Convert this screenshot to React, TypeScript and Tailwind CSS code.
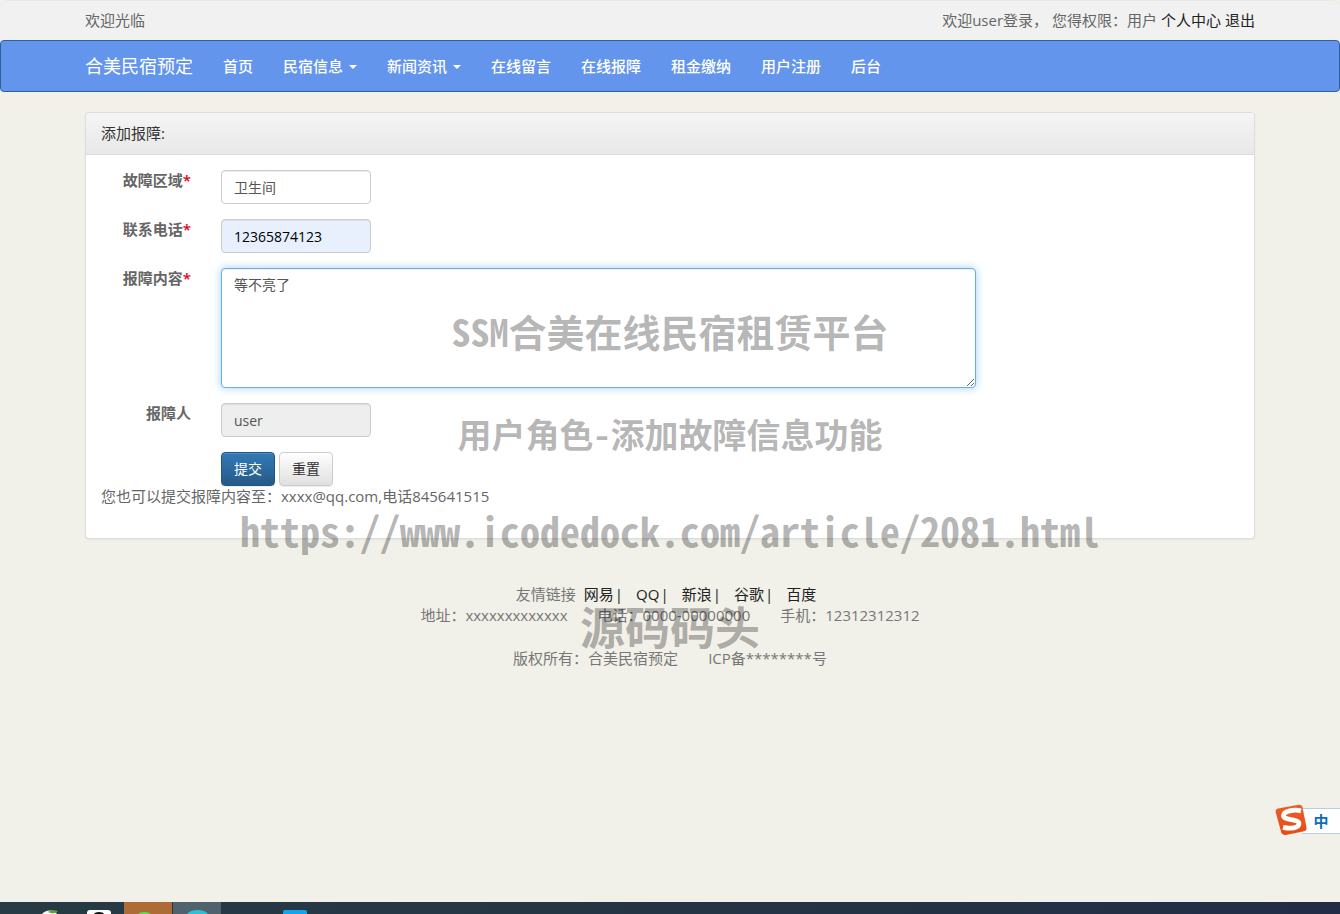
import React from 'react';

const navItems = [
  { label: '首页' },
  { label: '民宿信息', caret: true },
  { label: '新闻资讯', caret: true },
  { label: '在线留言' },
  { label: '在线报障' },
  { label: '租金缴纳' },
  { label: '用户注册' },
  { label: '后台' },
];

const friendLinks = ['网易', 'QQ', '新浪', '谷歌', '百度'];

const control =
  'block h-[34px] w-[150px] rounded border border-[#ccc] px-3 text-[14px] shadow-[inset_0_1px_1px_rgba(0,0,0,0.075)] outline-none';

function TopBar() {
  return (
    <div className="rounded-t-lg border-t border-[#e9e9e9] bg-[#f1f1f1]">
      <div className="mx-auto flex h-[39px] max-w-[1170px] items-center justify-between">
        <span>欢迎光临</span>
        <div className="flex gap-1">
          <span>欢迎user登录，&nbsp;您得权限：用户</span>
          <a href="#center" className="text-[#222]">个人中心</a>
          <a href="#logout" className="text-[#222]">退出</a>
        </div>
      </div>
    </div>
  );
}

function NavBar() {
  return (
    <nav className="rounded border border-[#2e6296] bg-[#6495ed] text-white">
      <div className="mx-auto flex h-[50px] max-w-[1170px] items-center">
        <a href="#home" className="pr-[15px] text-[18px]">合美民宿预定</a>
        <ul className="flex">
          {navItems.map((item) => (
            <li key={item.label}>
              <a href="#nav" className="flex items-center px-[15px] font-medium">
                {item.label}
                {item.caret && (
                  <span className="ml-[6px] mt-[2px] border-x-4 border-t-4 border-x-transparent border-t-white" />
                )}
              </a>
            </li>
          ))}
        </ul>
      </div>
    </nav>
  );
}

function Field({ id, label, required, children }: { id: string; label: string; required?: boolean; children: React.ReactNode }) {
  return (
    <div className="flex items-start">
      <label htmlFor={id} className="w-[120px] shrink-0 pr-[30px] text-right font-bold">
        {label}
        {required && <span className="font-semibold text-[#e60012]">*</span>}
      </label>
      {children}
    </div>
  );
}

function ReportPanel() {
  return (
    <section className="rounded border border-[#ddd] bg-white shadow-[0_1px_2px_rgba(0,0,0,0.05)]">
      <h1 className="rounded-t border-b border-[#ddd] bg-linear-to-b from-[#f5f5f5] to-[#e8e8e8] px-[15px] py-[10px] text-[#333]">
        添加报障:
      </h1>
      <div className="px-[15px] pt-[15px] pb-[31px]">
        <form className="flex flex-col gap-[15px]" onSubmit={(e) => e.preventDefault()}>
          <Field id="area" label="故障区域" required>
            <input id="area" defaultValue="卫生间" className={`${control} bg-white text-[#555]`} />
          </Field>
          <Field id="phone" label="联系电话" required>
            <input id="phone" defaultValue="12365874123" className={`${control} bg-[#e8f0fe] text-black`} />
          </Field>
          <Field id="content" label="报障内容" required>
            <textarea
              id="content"
              defaultValue="等不亮了"
              className="block h-[120px] w-[755px] max-w-full rounded border border-[#66afe9] bg-white px-3 py-[6px] text-[14px] leading-5 text-[#555] shadow-[inset_0_1px_1px_rgba(0,0,0,0.075),0_0_8px_rgba(102,175,233,0.6)] outline-none"
            />
          </Field>
          <Field id="reporter" label="报障人">
            <input id="reporter" readOnly defaultValue="user" className={`${control} bg-[#eee] text-[#555]`} />
          </Field>
          <div className="flex gap-1 pl-[120px] text-[14px] leading-5">
            <button
              type="submit"
              className="h-[34px] rounded border border-[#245580] bg-linear-to-b from-[#337ab7] to-[#265a88] px-3 text-white shadow-[inset_0_1px_0_rgba(255,255,255,0.15),0_1px_1px_rgba(0,0,0,0.075)]"
            >
              提交
            </button>
            <button
              type="reset"
              className="h-[34px] rounded border border-[#ccc] bg-linear-to-b from-white to-[#e0e0e0] px-3 text-[#333] shadow-[inset_0_1px_0_rgba(255,255,255,0.15),0_1px_1px_rgba(0,0,0,0.075)]"
            >
              重置
            </button>
          </div>
        </form>
        <p>您也可以提交报障内容至：xxxx@qq.com,电话845641515</p>
      </div>
    </section>
  );
}

function Footer() {
  return (
    <footer className="flex flex-col items-center pt-[45px] text-[#777]">
      <div className="flex gap-2 pr-[8px]">
        <span>友情链接</span>
        <div className="flex gap-[13px] text-[#222]">
          {friendLinks.map((name, i) => (
            <a key={name} href="#friend" className="flex gap-px">
              {name}
              {i < friendLinks.length - 1 && <span>|</span>}
            </a>
          ))}
        </div>
      </div>
      <div className="flex gap-[30px]">
        <span>地址：xxxxxxxxxxxxx</span>
        <span>电话：0000-00000000</span>
        <span>手机：12312312312</span>
      </div>
      <div className="mt-[22px] flex gap-[30px]">
        <span>版权所有：合美民宿预定</span>
        <span>ICP备********号</span>
      </div>
    </footer>
  );
}

function Watermark() {
  return (
    <div className="pointer-events-none absolute inset-x-0 top-0 text-center font-['Noto_Sans_CJK_SC',sans-serif] font-bold whitespace-nowrap text-black/30 [font-feature-settings:'hwid']">
      <div className="absolute inset-x-0 top-[306px] text-[38px] leading-[50px]">SSM合美在线民宿租赁平台</div>
      <div className="absolute inset-x-0 top-[409px] text-[34px] leading-[50px]">用户角色-添加故障信息功能</div>
      <div className="absolute inset-x-0 top-[505px] text-[40px] leading-[50px]">
        https://www.icodedock.com/article/2081.html
      </div>
      <div className="absolute inset-x-0 top-[596px] text-[45px] leading-[60px]">源码码头</div>
    </div>
  );
}

function InputMethodBadge() {
  return (
    <div className="absolute right-0 bottom-[76px] flex items-center">
      <svg width="34" height="34" viewBox="0 0 34 34" className="relative z-10 -mr-[6px]" aria-hidden="true">
        <defs>
          <linearGradient id="badge" x1="0" y1="0" x2="0" y2="1">
            <stop offset="0" stopColor="#e8612c" />
            <stop offset="1" stopColor="#e84a12" />
          </linearGradient>
        </defs>
        <path d="M4 4.500 24.500 .8q3.200-.5 4 2.400L32.500 23.500q.5 3-2.400 3.800L11.500 31q-3.200.5-4.200-2.400L1.700 8.200q-.500-3 2.300-3.700z" fill="url(#badge)" />
        <path
          d="M27 6.800C20 5.200 9.500 7 9.500 11.800c0 4.700 15.500 3 15.500 7.700 0 4.500-8.500 5.700-16 3.800"
          fill="none"
          stroke="#fff"
          strokeWidth="4.800"
        />
      </svg>
      <div className="flex h-[26px] w-[38px] items-center justify-center border-y border-[#b5cfe6] bg-white text-[15px] font-bold text-[#0f6cbd]">
        中
      </div>
    </div>
  );
}

function TaskBar() {
  return (
    <div className="mt-auto h-3 overflow-hidden bg-linear-to-r from-[#263b44] to-[#222d45]">
      <svg width="330" height="12" viewBox="0 0 330 12" aria-hidden="true">
        <path d="M42 12q3-4 9-3.500 4 0 6 3.500z" fill="#f4f8f1" />
        <path d="M48 10q4-3 10-1-2 3-7 2z" fill="#5aa332" />
        <path d="M87 12v-1q0-3 3-3h18q3 0 3 3v1z" fill="#fff" />
        <path d="M94 12q1-2 5-2t5 2z" fill="#111" />
        <rect x="124" width="48" height="12" fill="#ad6b35" />
        <path d="M138 12q2-2 6.500-2t6.500 2z" fill="#62dc55" />
        <rect x="173" width="48" height="12" fill="#50626b" />
        <path d="M187 12q3-4 10.500-4t10.500 4z" fill="#30c0cf" />
        <path d="M283 12v-2q0-2 2-2h20q2 0 2 2v2z" fill="#12a5ee" />
      </svg>
    </div>
  );
}

export default function App() {
  return (
    <div className="relative flex min-h-screen flex-col overflow-hidden bg-[#f1f0e9] font-['Open_Sans','Noto_Sans_CJK_SC',sans-serif] text-[15px] leading-[21px] text-[#666]">
      <TopBar />
      <NavBar />
      <main className="mx-auto mt-5 w-full max-w-[1170px]">
        <ReportPanel />
      </main>
      <Footer />
      <TaskBar />
      <Watermark />
      <InputMethodBadge />
    </div>
  );
}
